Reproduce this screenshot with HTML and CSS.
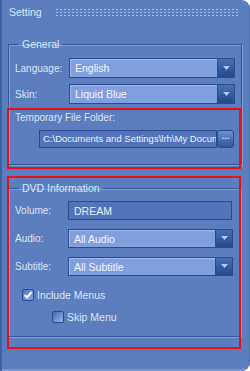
FILE: index.html
```html
<!doctype html>
<html lang="en">
<head>
    <meta charset="UTF-8">
    <title>Setting</title>
    <link rel="stylesheet" href="styles.css">
</head>
<body>

    <div class="panel">

        <div class="title">
            <span>Setting</span>
            <div class="grip"></div>
        </div>

        <fieldset class="group general">
            <legend>General</legend>
            <div class="row">
                <label>Language:</label>
                <div class="select">English<span class="drop"><svg width="7" height="5" viewBox="0 0 7 5"><path d="M0 0H7L3.5 4Z" fill="#a9cdf7"/></svg></span></div>
            </div>
            <div class="row">
                <label>Skin:</label>
                <div class="select">Liquid Blue<span class="drop"><svg width="7" height="5" viewBox="0 0 7 5"><path d="M0 0H7L3.5 4Z" fill="#a9cdf7"/></svg></span></div>
            </div>
            <div class="temp-label">Temporary File Folder:</div>
            <div class="path-row">
                <div class="path"><span>C:\Documents and Settings\lrh\My Docum</span></div>
                <span class="browse">...</span>
            </div>
        </fieldset>

        <fieldset class="group dvd">
            <legend>DVD Information</legend>
            <div class="row wide">
                <label>Volume:</label>
                <div class="field">DREAM</div>
            </div>
            <div class="row wide">
                <label>Audio:</label>
                <div class="select short">All Audio<span class="drop"><svg width="7" height="5" viewBox="0 0 7 5"><path d="M0 0H7L3.5 4Z" fill="#a9cdf7"/></svg></span></div>
            </div>
            <div class="row wide">
                <label>Subtitle:</label>
                <div class="select short">All Subtitle<span class="drop"><svg width="7" height="5" viewBox="0 0 7 5"><path d="M0 0H7L3.5 4Z" fill="#a9cdf7"/></svg></span></div>
            </div>
            <div class="check include">
                <span class="box on"><svg width="10" height="10" viewBox="0 0 10 10"><path d="M1.5 5L4 7.5L8.5 2" stroke="#fff" stroke-width="2" fill="none"/></svg></span>
                Include Menus
            </div>
            <div class="check skip">
                <span class="box"></span>
                Skip Menu
            </div>
        </fieldset>

        <!-- red annotation frames -->
        <div class="mark mark-temp"></div>
        <div class="mark mark-dvd"></div>

    </div>

</body>
</html>
```

FILE: styles.css
```css
body{
    margin:0;
    padding:0;
    font-family: "Liberation Sans", Arial, sans-serif;
    font-size: 10px;
    color: #dce6f6;
}
.panel{
    position: relative;
    width: 250px;
    height: 371px;
    box-sizing: border-box;
    background: #5b7ebf;
    border-radius: 0 9px 9px 0;
    box-shadow: inset 2px 0 0 #3f62a5, inset -1px 0 0 #4d70b3, inset 0 -2px 0 #7696d0;
    overflow: hidden;
}
.title{
    height: 24px;
    display: flex;
    align-items: center;
    padding-left: 9px;
    font-size: 10.5px;
    color: #dde7f7;
}
.grip{
    margin-left: 13px;
    width: 183px;
    height: 8px;
    background-image: radial-gradient(circle, #a6bde5 0.7px, transparent 1px);
    background-size: 4px 3px;
}

.group{
    margin: 0 9px 0 8px;
    padding: 0 6px;
    border: 1px solid #35589b;
    box-shadow: inset 1px 1px 0 #7f9dd6, 1px 1px 0 #7f9dd6;
}
.group legend{
    padding: 0 3px;
    margin-left: 4px;
    line-height: 13px;
    font-size: 10.5px;
    color: #dce6f6;
}
.general{
    margin-top: 14px;
    padding-bottom: 16px;
}
.dvd{
    margin-top: 17px;
    padding-bottom: 13px;
}

.row{
    display: flex;
    align-items: center;
    height: 20px;
    margin-top: 6px;
}
.general .row:first-of-type{
    margin-top: 7px;
}
.row label{
    width: 54px;
}
.row.wide{
    height: 19px;
    margin-top: 9px;
}
.dvd .row:first-of-type{
    margin-top: 6px;
}
.row.wide label{
    width: 53px;
}

.select{
    position: relative;
    width: 166px;
    height: 20px;
    box-sizing: border-box;
    border: 1px solid #2c4d90;
    background: #809fdf;
    box-shadow: inset 1px 1px 0 #9db6ea;
    padding-left: 5px;
    display: flex;
    align-items: center;
    color: #f3f6ff;
    font-size: 10.5px;
}
.select.short{
    width: 165px;
    height: 19px;
}
.drop{
    position: absolute;
    right: 0;
    top: 0;
    bottom: 0;
    width: 16px;
    background: linear-gradient(#4670b5, #24498c);
    border-left: 1px solid #2a4b8d;
    display: flex;
    align-items: center;
    justify-content: center;
}
.field{
    width: 164px;
    height: 19px;
    box-sizing: border-box;
    border: 1px solid #2c4d90;
    background: #5174bb;
    padding-left: 5px;
    display: flex;
    align-items: center;
    color: #e8eefb;
    font-size: 10.5px;
}

.temp-label{
    margin-top: 7px;
    line-height: 13px;
}
.path-row{
    display: flex;
    margin-top: 6px;
    margin-left: 24px;
    height: 18px;
}
.path{
    width: 178px;
    box-sizing: border-box;
    border: 1px solid #2c4d90;
    background: #5174bb;
    padding-left: 3px;
    line-height: 16px;
    white-space: nowrap;
    overflow: hidden;
    color: #eef3fd;
    font-size: 9.5px;
}
.browse{
    width: 17px;
    box-sizing: border-box;
    border: 1px solid #2a4a8c;
    border-radius: 3px;
    background: linear-gradient(#6c92d3, #2f5598);
    color: #cfe0fb;
    font-size: 9px;
    line-height: 10px;
    text-align: center;
    font-weight: bold;
}

.check{
    display: flex;
    align-items: center;
    height: 12px;
    font-size: 10.5px;
}
.check.include{
    margin-top: 13px;
    margin-left: 7px;
}
.check.skip{
    margin-top: 10px;
    margin-left: 37px;
}
.box{
    width: 12px;
    height: 12px;
    box-sizing: border-box;
    border: 1px solid #2b4a8c;
    border-radius: 2px;
    margin-right: 3px;
    background: linear-gradient(135deg, #3f6db8, #8fb4ec);
    display: flex;
    align-items: center;
    justify-content: center;
}
.box.on{
    background: linear-gradient(135deg, #4a78c2, #7ea6e6);
}

.mark{
    position: absolute;
    left: 7px;
    width: 234px;
    box-sizing: border-box;
    border: 2px solid #e8121a;
}
.mark-temp{
    top: 108px;
    height: 61px;
}
.mark-dvd{
    top: 176px;
    height: 173px;
}
```
